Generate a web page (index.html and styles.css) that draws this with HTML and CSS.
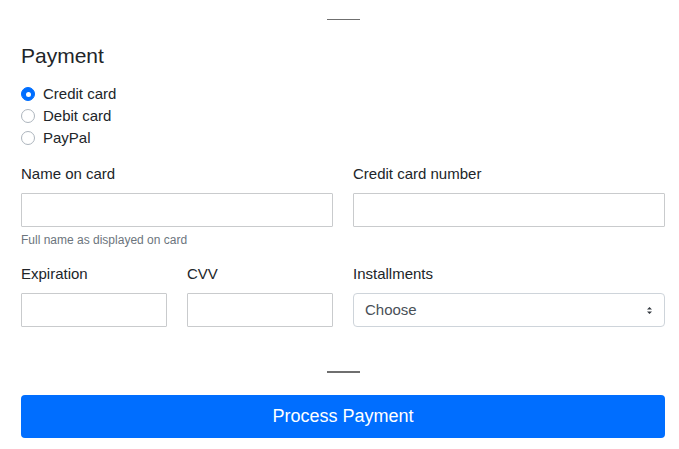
FILE: index.html
```html
<!DOCTYPE html>
<html lang="en">
<head>
<meta charset="utf-8">
<title>Payment</title>
<link rel="stylesheet" href="styles.css">
</head>
<body>
<div class="page">
  <hr class="divider divider-top">
  <h4 class="title">Payment</h4>
  <div class="radios">
    <label class="radio"><span class="dot dot-checked"></span>Credit card</label>
    <label class="radio"><span class="dot"></span>Debit card</label>
    <label class="radio"><span class="dot"></span>PayPal</label>
  </div>
  <div class="row row-first">
    <div class="field">
      <label class="lbl">Name on card</label>
      <input class="input" type="text">
      <small class="help">Full name as displayed on card</small>
    </div>
    <div class="field">
      <label class="lbl">Credit card number</label>
      <input class="input" type="text">
    </div>
  </div>
  <div class="row row-second">
    <div class="row-inner">
      <div class="field">
        <label class="lbl">Expiration</label>
        <input class="input" type="text">
      </div>
      <div class="field">
        <label class="lbl">CVV</label>
        <input class="input" type="text">
      </div>
    </div>
    <div class="field">
      <label class="lbl">Installments</label>
      <div class="select">
        <span class="select-text">Choose</span>
        <svg class="select-arrows" width="5" height="7" viewBox="0 0 5 7"><path d="M2.5 0 L5 2.6 L0 2.6 Z M2.5 7 L5 4.4 L0 4.4 Z" fill="#343a40"/></svg>
      </div>
    </div>
  </div>
  <hr class="divider divider-bottom">
  <button class="btn" type="button">Process Payment</button>
</div>
</body>
</html>
```

FILE: styles.css
```css
html, body {
  margin: 0;
  padding: 0;
  background: #ffffff;
}
body {
  font-family: "Liberation Sans", Arial, sans-serif;
  color: #212529;
  font-size: 15px;
}
.page {
  padding: 0 14px 0 21px;
}
.divider {
  width: 33px;
  height: 0;
  border: 0;
  margin: 0 auto;
}
.divider-top {
  margin-top: 19px;
  border-top: 1px solid #6f6f6f;
}
.divider-bottom {
  margin-top: 44px;
  border-top: 2px solid #6f6f6f;
}
.title {
  margin: 23px 0 0;
  font-size: 21px;
  line-height: 25px;
  font-weight: 400;
}
.radios {
  margin-top: 15px;
  display: flex;
  flex-direction: column;
}
.radio {
  display: flex;
  align-items: center;
  height: 22px;
  line-height: 22px;
  font-size: 15px;
}
.dot {
  box-sizing: border-box;
  width: 14px;
  height: 14px;
  border-radius: 50%;
  border: 1px solid #adb5bd;
  background: #fff;
  margin-right: 8px;
  display: flex;
  align-items: center;
  justify-content: center;
}
.dot-checked {
  border-color: #006eff;
  background: #006eff;
}
.dot-checked::after {
  content: "";
  width: 5px;
  height: 5px;
  border-radius: 50%;
  background: #fff;
}
.row {
  display: grid;
  grid-template-columns: 1fr 1fr;
  column-gap: 20px;
  align-items: start;
}
.row-first {
  margin-top: 14px;
}
.row-second {
  margin-top: 15px;
}
.row-inner {
  display: grid;
  grid-template-columns: 1fr 1fr;
  column-gap: 20px;
}
.field {
  display: flex;
  flex-direction: column;
}
.lbl {
  font-size: 15px;
  line-height: 22px;
  margin-bottom: 8px;
}
.input {
  box-sizing: border-box;
  width: 100%;
  height: 34px;
  margin: 0;
  padding: 0 11px;
  border: 1px solid #c9cbcd;
  border-radius: 1px;
  background: #fff;
  font: inherit;
  outline: none;
}
.help {
  margin-top: 5px;
  font-size: 12px;
  line-height: 16px;
  color: #6c757d;
}
.select {
  box-sizing: border-box;
  height: 34px;
  border: 1px solid #ced4da;
  border-radius: 4px;
  display: flex;
  align-items: center;
  justify-content: space-between;
  padding: 0 12px 0 11px;
  background: #fff;
}
.select-text {
  font-size: 15px;
  line-height: 32px;
  color: #495057;
}
.select-arrows {
  display: block;
}
.btn {
  display: block;
  box-sizing: border-box;
  width: 100%;
  height: 43px;
  margin: 22px 0 0;
  border: 0;
  border-radius: 4px;
  background: #006eff;
  color: #fff;
  font-family: "Liberation Sans", Arial, sans-serif;
  font-size: 18px;
  line-height: 43px;
  padding: 0;
}
```
